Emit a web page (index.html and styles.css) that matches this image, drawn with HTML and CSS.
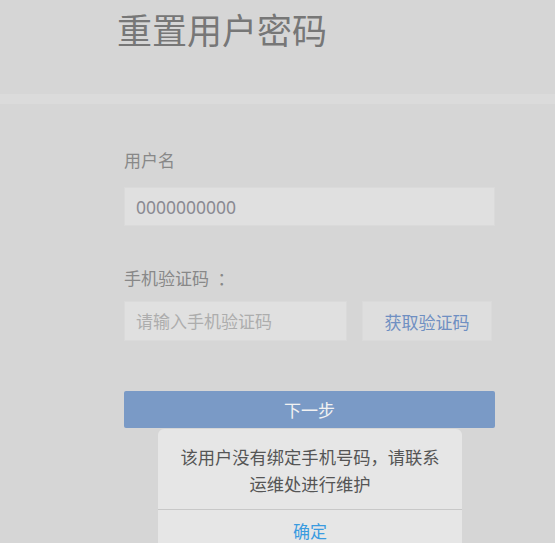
FILE: index.html
```html
<!DOCTYPE html>
<html lang="zh-CN">
<head>
    <meta charset="UTF-8">
    <meta name="viewport" content="width=device-width, initial-scale=1.0">
    <title>重置用户密码</title>
    <link rel="stylesheet" href="styles.css">
</head>
<body>
    <div class="header">
        <h1>重置用户密码</h1>
    </div>
    <div class="band"></div>

    <div class="container">
        <form id="reset-form">
            <div class="form-group">
                <label for="username">用户名</label>
                <input type="text" id="username" value="0000000000">
            </div>
            <div class="form-group">
                <label for="code">手机验证码&ensp;：</label>
                <div class="code-row">
                    <input type="text" id="code" placeholder="请输入手机验证码">
                    <button type="button" class="get-code">获取验证码</button>
                </div>
            </div>
            <button type="submit" class="next">下一步</button>
        </form>
    </div>

    <div class="dialog">
        <div class="dialog-msg">该用户没有绑定手机号码，请联系<br>运维处进行维护</div>
        <div class="dialog-btn">确定</div>
    </div>
</body>
</html>
```

FILE: styles.css
```css
html, body {
    margin: 0;
    padding: 0;
    height: 100%;
    overflow: hidden;
}
body {
    font-family: "Noto Sans CJK SC", "Noto Sans", sans-serif;
    background-color: #d6d6d6;
    position: relative;
}
.header {
    height: 94px;
    padding-left: 117px;
    box-sizing: border-box;
}
h1 {
    margin: 0;
    padding-top: 4px;
    font-size: 35px;
    font-weight: normal;
    line-height: 50px;
    color: #777;
}
.band {
    height: 10px;
    background-color: #dbdbdb;
}
.container {
    padding-left: 124px;
    width: 371px;
}
label {
    display: block;
    font-size: 17px;
    line-height: 20px;
    color: #888;
}
.form-group:first-child label {
    margin-top: 46px;
    margin-bottom: 17px;
}
.form-group:nth-child(2) label {
    margin-top: 42px;
    margin-bottom: 13px;
}
input {
    display: block;
    width: 100%;
    height: 39px;
    padding: 0 11px;
    border: 1px solid #dadada;
    background-color: #e0e0e0;
    box-sizing: border-box;
    font-family: "Noto Sans", "Noto Sans CJK SC", sans-serif;
    font-size: 17.5px;
    color: #8a8a92;
    outline: none;
}
input::placeholder {
    font-family: "Noto Sans CJK SC", sans-serif;
    font-size: 17px;
    color: #adadad;
}
.code-row {
    display: flex;
    gap: 15px;
}
.code-row input {
    width: 223px;
    height: 40px;
}
.get-code {
    width: 130px;
    height: 40px;
    border: 1px solid #dadada;
    background-color: #dedede;
    font-family: "Noto Sans CJK SC", sans-serif;
    font-size: 17px;
    color: #6f8fc2;
    padding: 0;
}
.next {
    display: block;
    width: 371px;
    height: 37px;
    margin-top: 50px;
    border: none;
    border-radius: 2px;
    background-color: #7a9ac6;
    font-family: "Noto Sans CJK SC", sans-serif;
    font-size: 17px;
    color: #f2f2f2;
}
.dialog {
    position: absolute;
    left: 158px;
    top: 429px;
    width: 304px;
    height: 130px;
    background-color: #e6e6e6;
    border-radius: 6px;
}
.dialog-msg {
    height: 81px;
    box-sizing: border-box;
    padding-top: 14px;
    text-align: center;
    font-size: 17.3px;
    line-height: 27px;
    color: #555;
    border-bottom: 1px solid #c8c8c8;
}
.dialog-btn {
    text-align: center;
    font-size: 17px;
    line-height: 42px;
    color: #3a9be0;
}
```
